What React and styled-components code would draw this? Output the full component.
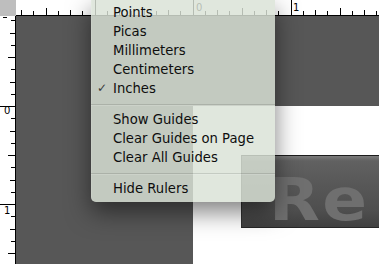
import React from 'react'
import styled, { createGlobalStyle } from 'styled-components'

const GlobalStyle = createGlobalStyle`
  html, body {
    margin: 0;
    padding: 0;
    background: #ffffff;
    overflow: hidden;
  }
`

const PPI = 98
const STEP = PPI / 8

const Workspace = styled.div`
  position: relative;
  width: 379px;
  height: 264px;
  display: grid;
  grid-template-columns: 16px 1fr;
  grid-template-rows: 16px 1fr;
  overflow: hidden;
  font-family: "DejaVu Sans", "Liberation Sans", sans-serif;
`

const Corner = styled.div`
  background: #bebebe;
`

const RulerSvg = styled.svg`
  display: block;
  background: #ffffff;
`

const Pasteboard = styled.div`
  background: #575757;
  display: flex;
  flex-direction: column;
  padding: 90px 0 0 177px;
  min-height: 0;
`

const Page = styled.div`
  flex: 1;
  background: #ffffff;
  padding: 49px 0 0 48px;
`

const TitleBox = styled.div`
  height: 71px;
  border-top: 1px solid #1c1c1c;
  border-bottom: 1px solid #262626;
  border-left: 1px solid #303030;
  background: linear-gradient(#7c7c7c 0px, #616161 5px, #575757 30px, #4e4e4e 55px, #404040 71px);
`

const TitleText = styled.div`
  margin: 19px 0 0 27px;
  font-family: "DejaVu Sans", sans-serif;
  font-weight: 700;
  font-size: 58px;
  line-height: 50px;
  letter-spacing: 2px;
  color: #6f6f6f;
  transform: scaleX(1.14);
  transform-origin: left center;
`

const Menu = styled.div`
  position: absolute;
  left: 91px;
  top: 0;
  width: 184px;
  padding: 3px 0 4px;
  background: rgba(218, 226, 214, 0.83);
  border-radius: 0 0 5px 5px;
  box-shadow: 0 10px 24px rgba(0, 0, 0, 0.5), inset 1px 0 0 rgba(255, 255, 255, 0.12);
  font-family: "DejaVu Sans", "Liberation Sans", sans-serif;
  font-size: 13.2px;
  color: #0e0e0e;
`

const Item = styled.div`
  display: grid;
  grid-template-columns: 22px 1fr;
  align-items: center;
  height: 19px;
  line-height: 19px;
  white-space: nowrap;
`

const Check = styled.span`
  padding-left: 6px;
  font-size: 12px;
  color: #3a3a3a;
`

const Separator = styled.div`
  height: 12px;
  display: flex;
  align-items: center;

  &::after {
    content: '';
    flex: 1;
    height: 1px;
    background: rgba(0, 0, 0, 0.12);
    box-shadow: 0 1px 0 rgba(255, 255, 255, 0.15);
  }
`

const tickLength = k => {
  if (k % 8 === 0) return 16
  if (k % 4 === 0) return 7
  if (k % 2 === 0) return 5
  return 4
}

const TopRuler = () => {
  const origin = 176.7
  const ticks = []
  for (let k = -16; k <= 16; k++) {
    const x = Math.round(origin + k * STEP) + 0.5
    if (x < 0 || x > 363) continue
    const len = tickLength(k)
    ticks.push(<line key={k} x1={x} x2={x} y1={15 - len} y2={15} stroke="#000" />)
  }
  return (
    <RulerSvg width="363" height="16" shapeRendering="crispEdges">
      {ticks}
      <line x1="0" x2="363" y1="15.5" y2="15.5" stroke="#000" />
      <text x="180" y="11" fontSize="10" fontFamily="DejaVu Sans, sans-serif" fill="#000">0</text>
      <text x="277" y="11" fontSize="10" fontFamily="DejaVu Sans, sans-serif" fill="#000">1</text>
    </RulerSvg>
  )
}

const LeftRuler = () => {
  const origin = 90
  const ticks = []
  for (let k = -8; k <= 16; k++) {
    const y = Math.round(origin + k * STEP) + 0.5
    if (y < 0 || y > 248) continue
    const len = tickLength(k)
    ticks.push(<line key={k} x1={15 - len} x2={15} y1={y} y2={y} stroke="#000" />)
  }
  return (
    <RulerSvg width="16" height="248" shapeRendering="crispEdges">
      {ticks}
      <line x1="15.5" x2="15.5" y1="0" y2="248" stroke="#000" />
      <line x1="3" x2="7" y1="1.5" y2="1.5" stroke="#000" />
      <text x="4" y="98" fontSize="10" fontFamily="DejaVu Sans, sans-serif" fill="#000">0</text>
      <text x="4" y="198" fontSize="10" fontFamily="DejaVu Sans, sans-serif" fill="#000">1</text>
    </RulerSvg>
  )
}

const units = ['Points', 'Picas', 'Millimeters', 'Centimeters', 'Inches']
const guides = ['Show Guides', 'Clear Guides on Page', 'Clear All Guides']

export default function App() {
  const active = 'Inches'
  return (
    <>
      <GlobalStyle />
      <Workspace>
        <Corner />
        <TopRuler />
        <LeftRuler />
        <Pasteboard>
          <Page>
            <TitleBox>
              <TitleText>Re</TitleText>
            </TitleBox>
          </Page>
        </Pasteboard>
        <Menu>
          {units.map(u => (
            <Item key={u}>
              <Check>{u === active ? '✓' : ''}</Check>
              <span>{u}</span>
            </Item>
          ))}
          <Separator />
          {guides.map(g => (
            <Item key={g}>
              <span />
              <span>{g}</span>
            </Item>
          ))}
          <Separator />
          <Item>
            <span />
            <span>Hide Rulers</span>
          </Item>
        </Menu>
      </Workspace>
    </>
  )
}
